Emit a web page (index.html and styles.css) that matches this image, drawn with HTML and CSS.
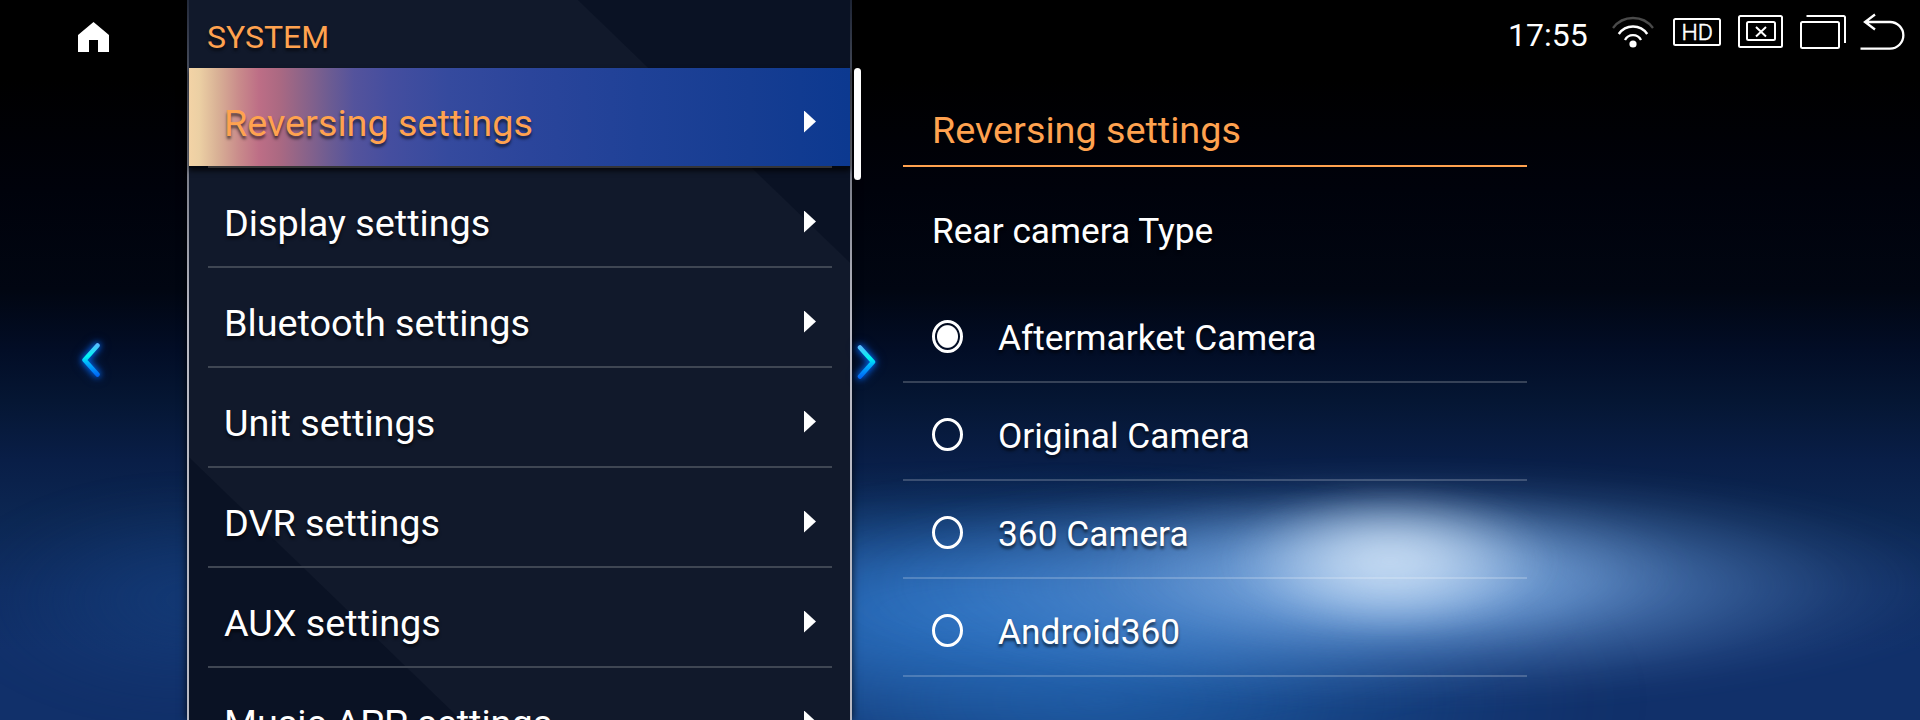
FILE: index.html
```html
<!DOCTYPE html>
<html lang="en">
<head>
<meta charset="utf-8">
<title>System settings</title>
<link rel="stylesheet" href="styles.css">
</head>
<body>
<div class="screen">
  <div class="glow glow-wide"></div>
  <div class="glow glow-blue"></div>
  <div class="glow glow-tail"></div>
  <div class="glow glow-mid"></div>
  <div class="glow glow-core"></div>
  <div class="glow glow-left"></div>

  <aside class="rail">
    <svg class="home" width="31" height="30" viewBox="0 0 31 30"><path d="M15.5 0 31 13v17H20V18h-9v12H0V13z" fill="#fff"/></svg>
    <svg class="chev" width="40" height="56" viewBox="0 0 40 56">
      <defs><linearGradient id="g" x1="0" y1="12" x2="0" y2="44" gradientUnits="userSpaceOnUse"><stop offset="0" stop-color="#5cb8ff"/><stop offset=".38" stop-color="#00f6f0"/><stop offset=".6" stop-color="#00b4ff"/><stop offset="1" stop-color="#0064f5"/></linearGradient></defs>
      <path d="M27.500 13.500 14.500 28 27.500 42.500" fill="none" stroke="url(#g)" stroke-width="4.500" stroke-linecap="round" stroke-linejoin="round"/>
    </svg>
  </aside>

  <nav class="menu">
    <h1 class="menu-title">SYSTEM</h1>
    <ul class="menu-list">
      <li class="item active"><span>Reversing settings</span><i class="tri"></i></li>
      <li class="item"><span>Display settings</span><i class="tri"></i></li>
      <li class="item"><span>Bluetooth settings</span><i class="tri"></i></li>
      <li class="item"><span>Unit settings</span><i class="tri"></i></li>
      <li class="item"><span>DVR settings</span><i class="tri"></i></li>
      <li class="item"><span>AUX settings</span><i class="tri"></i></li>
      <li class="item"><span>Music APP settings</span><i class="tri"></i></li>
    </ul>
  </nav>

  <div class="gutter">
    <div class="scrollbar"></div>
    <svg class="chev next" width="40" height="56" viewBox="0 0 40 56"><path d="M13 13.500 26 28 13 42.500" fill="none" stroke="url(#g)" stroke-width="4.500" stroke-linecap="round" stroke-linejoin="round"/></svg>
  </div>

  <main class="content">
    <header class="status">
      <span class="clock">17:55</span>
      <svg class="status-icons" width="320" height="60" viewBox="1600 0 320 60" fill="none" stroke="#fff" stroke-width="2">
        <circle cx="1633" cy="44" r="3.600" fill="#fff" stroke="none"/>
        <path d="M1625 40a9 9 0 0 1 16 0" stroke-width="2.300"/>
        <path d="M1618.800 34a17.200 17.200 0 0 1 28.400 0" stroke-width="2.500"/>
        <path d="M1613 28a25 25 0 0 1 40 0" stroke="#4a4a4a" stroke-width="2.300"/>
        <rect x="1674" y="19" width="46" height="26" rx="1.500"/>
        <text class="hd" x="1681.500" y="40.300" textLength="31.500" lengthAdjust="spacingAndGlyphs">HD</text>
        <rect x="1739" y="16" width="43" height="31" rx="1.500"/>
        <rect x="1747" y="22" width="28" height="18" rx="1.500"/>
        <path d="M1756 27l10 9.500M1766 27l-10 9.500"/>
        <rect x="1801" y="22" width="38" height="26" rx="1.500"/>
        <path d="M1806.500 16H1843.500q1.500 0 1.500 1.500V43"/>
        <path d="M1875 14.500 1865 22 1875 29.500M1865 22H1890a13.300 13.300 0 0 1 0 26.700H1860.500" stroke-width="2.300"/>
      </svg>
    </header>
    <section class="detail">
      <h2 class="detail-title">Reversing settings</h2>
      <p class="label">Rear camera Type</p>
      <div class="option"><i class="radio on"></i><span>Aftermarket Camera</span></div>
      <div class="option"><i class="radio"></i><span>Original Camera</span></div>
      <div class="option"><i class="radio"></i><span>360 Camera</span></div>
      <div class="option"><i class="radio"></i><span>Android360</span></div>
    </section>
  </main>
</div>
</body>
</html>
```

FILE: styles.css
```css
* { box-sizing: border-box; margin: 0; padding: 0; }
body { background: #000; font-family: Roboto, sans-serif; font-weight: 400; color: #fff; overflow: hidden; }
i { font-style: normal; }

.screen {
  position: relative;
  display: flex;
  width: 1920px;
  height: 720px;
  overflow: hidden;
  background: linear-gradient(#000 0, #000 80px, #00020b 190px, #010612 290px, #020d26 350px, #051633 400px, #091e47 460px, #0c2753 520px, #0f2d63 590px, #11306a 650px, #11306a 720px);
}
.rail, .menu, .gutter, .content { position: relative; }

/* soft light in the wallpaper */
.glow {
  position: absolute;
  -webkit-mask-image: radial-gradient(closest-side, #000, rgba(0,0,0,.93) 15%, rgba(0,0,0,.77) 30%, rgba(0,0,0,.55) 45%, rgba(0,0,0,.33) 60%, rgba(0,0,0,.14) 75%, rgba(0,0,0,.04) 88%, transparent);
  mask-image: radial-gradient(closest-side, #000, rgba(0,0,0,.93) 15%, rgba(0,0,0,.77) 30%, rgba(0,0,0,.55) 45%, rgba(0,0,0,.33) 60%, rgba(0,0,0,.14) 75%, rgba(0,0,0,.04) 88%, transparent);
}
.glow-wide { left: 550px; top: 460px; width: 1100px; height: 480px; background: rgba(32,100,175,.65); }
.glow-blue { left: 350px; top: 460px; width: 1240px; height: 300px; background: rgba(48,124,208,.75); }
.glow-tail { left: 800px; top: 455px; width: 1200px; height: 260px; background: rgba(108,160,224,.88); }
.glow-mid { left: 1070px; top: 474px; width: 640px; height: 190px; background: rgba(165,198,236,.46); }
.glow-core { left: 1210px; top: 475px; width: 360px; height: 172px; background: rgba(218,233,250,.7); }
.glow-left { left: -60px; top: 470px; width: 500px; height: 260px; background: rgba(22,66,130,.5); }

.rail { width: 187px; padding: 22px 0 0 78px; }
.home { display: block; }
.chev { display: block; margin: 280px 0 0 -8px; filter: drop-shadow(0 0 3px #0070ff) drop-shadow(0 0 4px rgba(0,100,255,.5)); }

.menu {
  width: 665px;
  padding: 0 2px;
  background:
    linear-gradient(rgba(190,190,198,.1), rgba(190,190,198,.6) 168px, #b9bac4 320px) left / 2px 100% no-repeat,
    linear-gradient(rgba(190,190,198,.1), rgba(190,190,198,.6) 168px, #b9bac4 320px) right / 2px 100% no-repeat,
    linear-gradient(44deg, #0a1224 0, #0a1224 190px, transparent 191px),
    linear-gradient(224deg, #0a1224 0, #0a1224 190px, transparent 191px),
    #11192b;
  box-shadow: 0 0 8px rgba(0,0,0,.8);
}
.menu-title { height: 68px; padding: 18px 0 0 18px; font-size: 32px; line-height: 38px; font-weight: 400; color: #ffa24f; text-shadow: 0 3px 3px rgba(0,0,0,.5); }
.menu-list { list-style: none; }
.item {
  display: flex;
  justify-content: space-between;
  height: 100px;
  padding: 33px 34px 0 35px;
  font-size: 37.800px;
  line-height: 44px;
  text-shadow: 0 3px 3px rgba(0,0,0,.6);
  background: linear-gradient(#3f4653, #3f4653) 19px 98px / 624px 2px no-repeat;
}
.item.active {
  color: #ffa24f;
  background:
    linear-gradient(#343436, #343436) 19px 98px / 624px 2px no-repeat,
    linear-gradient(90deg, #f3d3a6 0, #ecd0a4 10px, #d9b296 28px, #c98b8b 50px, #bd6e86 70px, #ab6982 90px, #8f6488 112px, #6d5c92 140px, #54539c 165px, #454e9f 200px, #354a9e 260px, #2b459b 340px, #1f4197 450px, #163d92 560px, #0c3990 661px) 0 0 / 100% 98px no-repeat,
    #040810;
  box-shadow: 0 3px 5px rgba(0,0,0,.7);
}
.item span, .detail-title { letter-spacing: -.02px; }
.tri { width: 12px; height: 22px; margin-top: 9.500px; background: #fff; clip-path: polygon(0 0, 100% 50%, 0 100%); }

.gutter { width: 51px; padding: 68px 0 0 2px; }
.scrollbar { width: 7px; height: 112px; border-radius: 3.500px; background: #fff; }
.next { margin: 153.500px 0 0 -7px; }

.content { width: 1017px; }
.status { display: flex; justify-content: flex-end; height: 80px; }
.clock { width: 92px; padding-top: 16px; font-size: 32px; line-height: 38px; }
.status-icons { display: block; }
.hd { font: 300 22px Roboto, sans-serif; fill: #fff; stroke: #fff; stroke-width: .5px; }

.detail { width: 624px; }
.detail-title { height: 87px; padding: 28px 0 0 29px; border-bottom: 2px solid #ffa24f; font-size: 37.800px; line-height: 44px; font-weight: 400; color: #ffa24f; }
.label { height: 118px; padding: 43px 0 0 29px; font-size: 35.300px; line-height: 42px; text-shadow: 0 3px 3px rgba(0,0,0,.6); }
.option { display: flex; height: 98px; padding: 35px 0 0 29px; border-bottom: 2px solid rgba(255,255,255,.2); font-size: 35.300px; line-height: 36px; text-shadow: 0 3px 3px rgba(0,0,0,.6); }
.radio { width: 31px; height: 33px; margin-right: 35px; border: 3px solid #fff; border-radius: 50%; }
.radio.on { background: radial-gradient(ellipse closest-side, #fff 80%, transparent 88%); }
```
